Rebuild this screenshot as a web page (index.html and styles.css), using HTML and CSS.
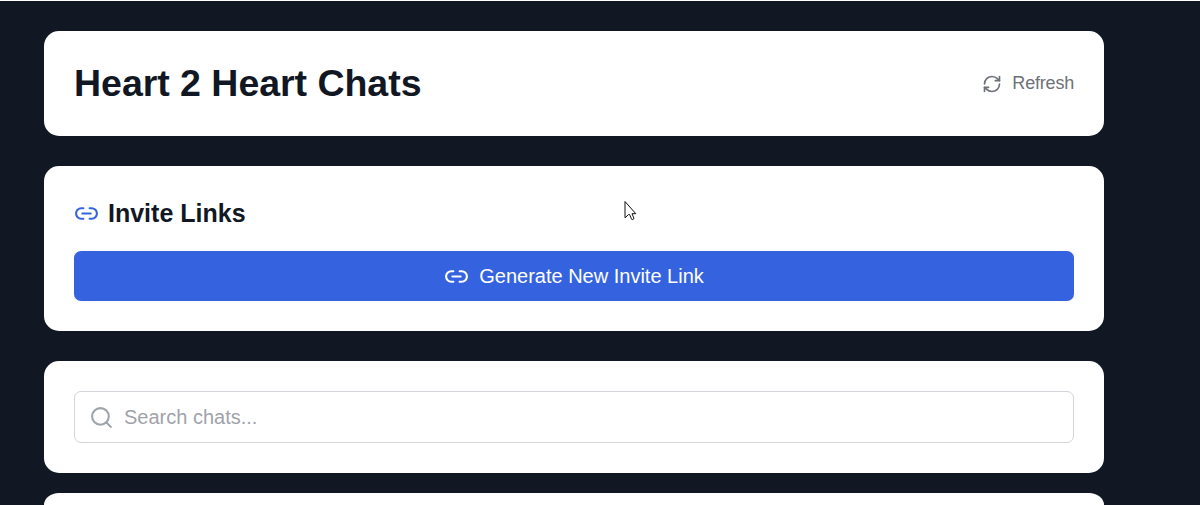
FILE: index.html
```html
<!DOCTYPE html>
<html lang="en">
<head>
<meta charset="utf-8">
<title>Heart 2 Heart Chats</title>
<link rel="stylesheet" href="styles.css">
</head>
<body>
<main class="page">
  <header class="card header">
    <h1 class="title">Heart 2 Heart Chats</h1>
    <button class="refresh">
      <svg class="icon icon-refresh" viewBox="0 0 24 24"><path d="M3 12a9 9 0 0 1 9-9 9.75 9.75 0 0 1 6.74 2.74L21 8"/><path d="M21 3v5h-5"/><path d="M21 12a9 9 0 0 1-9 9 9.75 9.75 0 0 1-6.74-2.74L3 16"/><path d="M8 16H3v5"/></svg>
      <span>Refresh</span>
    </button>
  </header>
  <section class="card invite">
    <h2 class="subtitle">
      <svg class="icon icon-link icon-blue" viewBox="0 0 24 24"><path d="M9 17H7A5 5 0 0 1 7 7h2"/><path d="M15 7h2a5 5 0 1 1 0 10h-2"/><path d="M8 12h8"/></svg>
      <span>Invite Links</span>
    </h2>
    <button class="generate">
      <svg class="icon icon-link" viewBox="0 0 24 24"><path d="M9 17H7A5 5 0 0 1 7 7h2"/><path d="M15 7h2a5 5 0 1 1 0 10h-2"/><path d="M8 12h8"/></svg>
      <span>Generate New Invite Link</span>
    </button>
  </section>
  <section class="card search">
    <label class="field">
      <svg class="icon icon-search" viewBox="0 0 24 24"><circle cx="11" cy="11" r="8"/><path d="m21 21-4.3-4.3"/></svg>
      <input class="input" type="text" placeholder="Search chats...">
    </label>
  </section>
  <section class="card chats"></section>
</main>
<svg class="cursor" viewBox="0 0 13 21"><path d="M1 .5v16.3l3.6-3.3h1l2 4.8q1.2.8 2.4-.8l-2-4.8h3.8z"/></svg>
</body>
</html>
```
FILE: styles.css
```css
* { box-sizing: border-box; }
body {
  margin: 0;
  height: 505px;
  overflow: hidden;
  background: #111824;
  border-top: 1px solid #fff;
  font-family: "Liberation Sans", Arial, sans-serif;
  color: #111824;
}
.page {
  width: 1060px;
  margin-left: 44px;
  padding-top: 30px;
}
.card {
  background: #fff;
  border-radius: 15px;
  padding: 30px;
}
.header {
  height: 105px;
  display: flex;
  align-items: center;
  justify-content: space-between;
  margin-bottom: 30px;
}
.title { margin: 0; font-size: 37.5px; line-height: 45px; letter-spacing: -0.03px; }
button { border: 0; background: none; padding: 0; font-family: inherit; }
.refresh {
  display: flex;
  align-items: center;
  gap: 10px;
  font-size: 18px;
  letter-spacing: -0.2px;
  color: #6d7279;
}
.icon { fill: none; stroke: currentColor; stroke-width: 2; stroke-linecap: round; stroke-linejoin: round; flex: none; }
.icon-refresh { width: 20px; height: 20px; }
.icon-link { width: 25px; height: 25px; }
.icon-blue { color: #3563e0; }
.invite { height: 165px; margin-bottom: 30px; }
.subtitle {
  display: flex;
  align-items: center;
  gap: 9px;
  margin: 0 0 20px;
  font-size: 25px;
  line-height: 35px;
}
.generate {
  display: flex;
  align-items: center;
  justify-content: center;
  gap: 10px;
  width: 100%;
  height: 50px;
  border-radius: 7px;
  background: #3563e0;
  color: #fff;
  font-size: 20px;
}
.search { height: 112px; margin-bottom: 20px; }
.field {
  display: flex;
  align-items: center;
  gap: 10px;
  height: 52px;
  padding: 0 14px;
  border: 1px solid #d1d4d8;
  border-radius: 7px;
}
.icon-search { width: 25px; height: 25px; color: #9ca3aa; }
.input { flex: 1; border: 0; outline: 0; padding: 0; background: none; font: 20px "Liberation Sans", Arial, sans-serif; }
.input::placeholder { color: #9fa3a9; }
.chats { height: 12px; padding: 0; border-radius: 15px 15px 0 0 / 12px 12px 0 0; }
.cursor {
  position: absolute;
  left: 624px;
  top: 201px;
  width: 13px;
  height: 21px;
  fill: #fff;
  stroke: #111;
  stroke-width: 1;
}
```
